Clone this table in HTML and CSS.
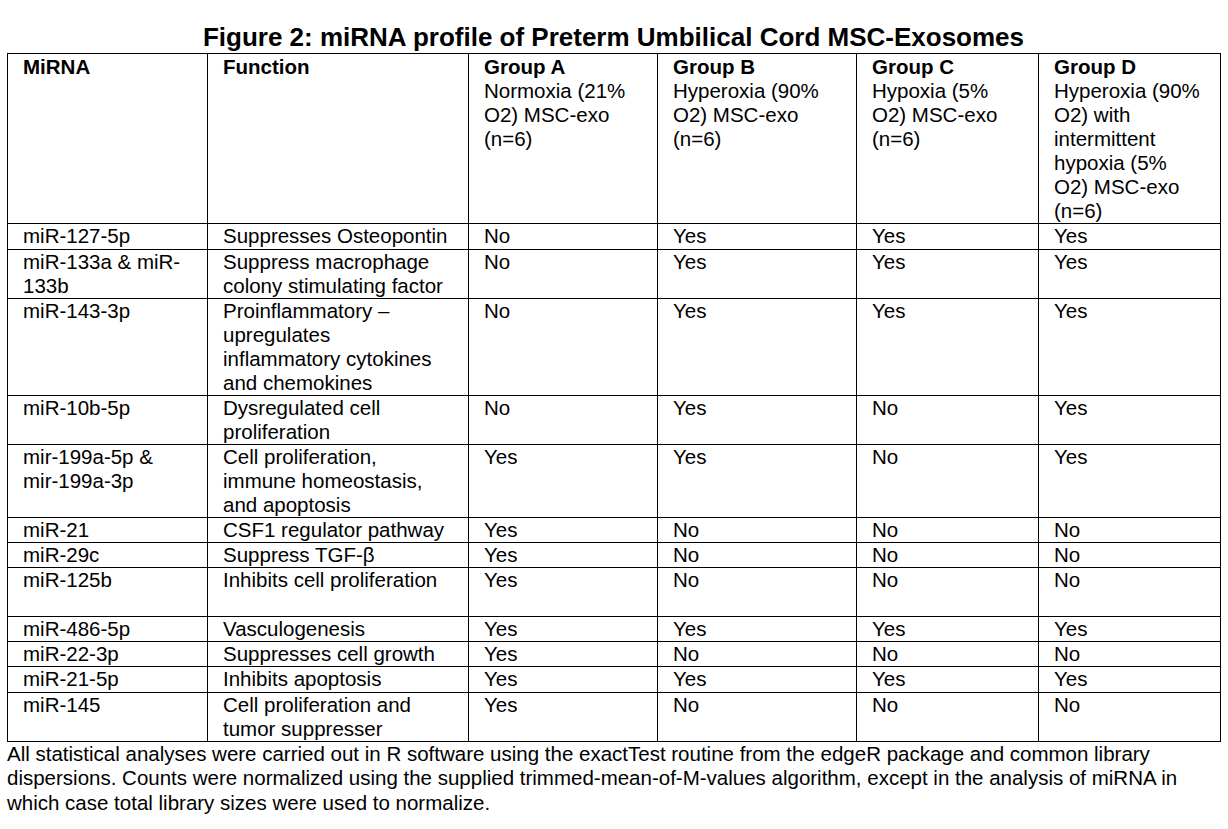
FILE: index.html
```html
<!DOCTYPE html>
<html lang="en">
<head>
<meta charset="utf-8">
<title>Figure 2: miRNA profile of Preterm Umbilical Cord MSC-Exosomes</title>
<link rel="stylesheet" href="styles.css">
</head>
<body>
<main class="page">
  <h1 class="title">Figure 2: miRNA profile of Preterm Umbilical Cord MSC-Exosomes</h1>
  <table class="profile">
    <colgroup>
      <col class="c-mirna">
      <col class="c-func">
      <col class="c-a">
      <col class="c-b">
      <col class="c-c">
      <col class="c-d">
    </colgroup>
    <thead>
      <tr>
        <th><b>MiRNA</b></th>
        <th><b>Function</b></th>
        <th><b>Group A</b><br>Normoxia (21% O2) MSC-exo (n=6)</th>
        <th><b>Group B</b><br>Hyperoxia (90% O2) MSC-exo (n=6)</th>
        <th><b>Group C</b><br>Hypoxia (5% O2) MSC-exo (n=6)</th>
        <th><b>Group D</b><br>Hyperoxia (90% O2) with intermittent hypoxia (5% O2) MSC-exo (n=6)</th>
      </tr>
    </thead>
    <tbody>
      <tr><td>miR-127-5p</td><td>Suppresses Osteopontin</td><td>No</td><td>Yes</td><td>Yes</td><td>Yes</td></tr>
      <tr><td>miR-133a &amp; miR-133b</td><td>Suppress macrophage colony stimulating factor</td><td>No</td><td>Yes</td><td>Yes</td><td>Yes</td></tr>
      <tr><td>miR-143-3p</td><td>Proinflammatory – upregulates inflammatory cytokines and chemokines</td><td>No</td><td>Yes</td><td>Yes</td><td>Yes</td></tr>
      <tr><td>miR-10b-5p</td><td>Dysregulated cell proliferation</td><td>No</td><td>Yes</td><td>No</td><td>Yes</td></tr>
      <tr><td>mir-199a-5p &amp; <span class="nw">mir-199a-3p</span></td><td>Cell proliferation, immune homeostasis, and apoptosis</td><td>Yes</td><td>Yes</td><td>No</td><td>Yes</td></tr>
      <tr><td>miR-21</td><td>CSF1 regulator pathway</td><td>Yes</td><td>No</td><td>No</td><td>No</td></tr>
      <tr><td>miR-29c</td><td>Suppress TGF-β</td><td>Yes</td><td>No</td><td>No</td><td>No</td></tr>
      <tr class="tall"><td>miR-125b</td><td>Inhibits cell proliferation</td><td>Yes</td><td>No</td><td>No</td><td>No</td></tr>
      <tr><td>miR-486-5p</td><td>Vasculogenesis</td><td>Yes</td><td>Yes</td><td>Yes</td><td>Yes</td></tr>
      <tr><td>miR-22-3p</td><td>Suppresses cell growth</td><td>Yes</td><td>No</td><td>No</td><td>No</td></tr>
      <tr><td>miR-21-5p</td><td>Inhibits apoptosis</td><td>Yes</td><td>Yes</td><td>Yes</td><td>Yes</td></tr>
      <tr><td>miR-145</td><td>Cell proliferation and tumor suppresser</td><td>Yes</td><td>No</td><td>No</td><td>No</td></tr>
    </tbody>
  </table>
  <p class="note">All statistical analyses were carried out in R software using the exactTest routine from the edgeR package and common library dispersions. Counts were normalized using the supplied trimmed-mean-of-M-values algorithm, except in the analysis of miRNA in which case total library sizes were used to normalize.</p>
</main>
</body>
</html>
```

FILE: styles.css
```css
html, body {
  margin: 0;
  padding: 0;
  background: #ffffff;
}

body {
  font-family: "Liberation Sans", Arial, sans-serif;
  color: #000000;
}

.page {
  width: 1213px;
  padding: 22px 0 0 7px;
}

.title {
  margin: 0;
  font-size: 26px;
  line-height: 31px;
  font-weight: bold;
  text-align: center;
}

.profile {
  width: 1213px;
  table-layout: fixed;
  border-collapse: collapse;
  font-size: 20.5px;
  line-height: 24.07px;
}

.c-mirna { width: 200px; }
.c-func { width: 261px; }
.c-a { width: 189px; }
.c-b { width: 199px; }
.c-c { width: 182px; }
.c-d { width: 182px; }

.profile th,
.profile td {
  border: 1px solid #000000;
  padding: 0 17px 0 15px;
  vertical-align: top;
  text-align: left;
  font-weight: normal;
}

.profile thead th {
  padding-top: 1px;
}

.profile th b {
  font-weight: bold;
}

.profile tr.tall td {
  height: 48px;
}

.nw {
  white-space: nowrap;
}

.note {
  margin: 0;
  font-size: 20.5px;
  line-height: 24.5px;
}
```
